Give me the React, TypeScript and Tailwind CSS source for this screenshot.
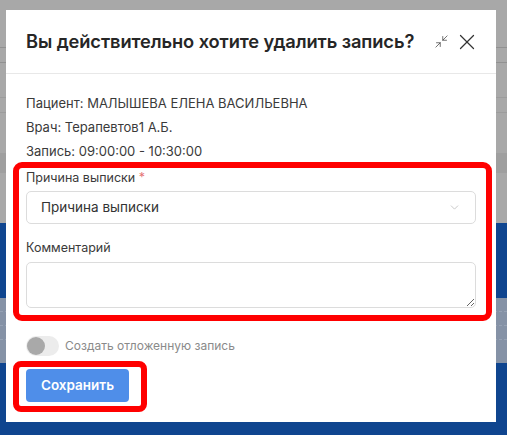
import { Minimize2, X, ChevronDown } from "lucide-react";

const font = { fontFamily: "Inter, 'Noto Sans', sans-serif" };

const Backdrop = () => {
  return (
    <div className="flex h-[435px] w-full flex-col">
      <div className="h-[47px] bg-[#a8a8a8]" />
      <div className="h-[15px] border-t border-[#919191] bg-[#a8a8a8]" />
      <div className="h-[35px] border-t border-[#919191] bg-[#a8a8a8]" />
      <div className="h-[15px] border-t border-[#9c9c9c] bg-[#a8a8a8]" />
      <div className="h-[41px] border-t border-[#9c9c9c] bg-[#a8a8a8]" />
      <div className="h-[20px] bg-[#9f9f9f]" />
      <div className="h-[50px] bg-[#a8a8a8]" />
      <div className="h-[75px] bg-[#0f458f]" />
      <div className="flex h-[65px] flex-col bg-[#8592a6]">
        <div className="h-[14px] border-b border-dashed border-[#96a2b4]" />
        <div className="h-[14px] border-b border-dashed border-[#96a2b4]" />
        <div className="h-[14px] border-b border-dashed border-[#96a2b4]" />
      </div>
      <div className="flex-1 bg-[#0f458f]" />
    </div>
  );
};

const DeleteRecordModal = () => {
  return (
    <div className="absolute left-[6px] top-[10px] w-[490px] bg-white" style={font}>
      <div className="flex h-[64px] items-center justify-between border-b border-[#e8e8e8] pl-[20px] pr-[16px]">
        <h2 className="text-[18.3px] font-semibold tracking-[-0.1px] text-[#262626]">
          Вы действительно хотите удалить запись?
        </h2>
        <div className="flex items-center gap-[5px] text-[#333]">
          <Minimize2 size={15} strokeWidth={1.1} />
          <X size={26} strokeWidth={1.15} />
        </div>
      </div>

      <div className="px-[20px] pb-[20px] pt-[19px] text-[13px] text-[#3a3a3a]">
        <div className="flex flex-col gap-[4px] leading-[20px]">
          <p>Пациент: МАЛЫШЕВА ЕЛЕНА ВАСИЛЬЕВНА</p>
          <p>Врач: Терапевтов1 А.Б.</p>
          <p>Запись: 09:00:00 - 10:30:00</p>
        </div>

        <label className="mt-[7px] block text-[12.5px] leading-[20px]">
          Причина выписки <span className="text-[#e57373]">*</span>
        </label>
        <div className="mt-[3px] flex h-[33px] items-center justify-between rounded-[5px] border border-[#dcdcdc] px-[14px] text-[13.5px] text-[#333]">
          <span>Причина выписки</span>
          <ChevronDown size={13} strokeWidth={1.5} className="text-[#bdbdbd]" />
        </div>

        <label className="mt-[14px] block text-[12.5px] leading-[20px]">Комментарий</label>
        <textarea className="mt-[4px] block h-[46px] w-full rounded-[5px] border border-[#dcdcdc] outline-none" />

        <div className="mt-[28px] flex items-center gap-[6px]">
          <div className="flex h-[20px] w-[33px] items-center rounded-full bg-[#ececec] pl-[1px]">
            <div className="h-[18px] w-[18px] rounded-full bg-[#a9a9a9]" />
          </div>
          <span className="text-[12px] text-[#8a8a8a]">Создать отложенную запись</span>
        </div>

        <button className="mt-[13px] h-[33px] w-[103px] rounded-[4px] bg-[#4f8ee9] text-[13.5px] font-semibold text-white">
          Сохранить
        </button>
      </div>
    </div>
  );
};

export default function App() {
  return (
    <div className="relative h-[435px] w-full overflow-hidden">
      <Backdrop />
      <DeleteRecordModal />
      {/* highlight frames drawn over the form */}
      <div className="pointer-events-none absolute left-[13px] top-[162px] h-[159px] w-[479px] rounded-[9px] border-[6px] border-[#ff0000]" />
      <div className="pointer-events-none absolute left-[13px] top-[361px] h-[51px] w-[134px] rounded-[8px] border-[6px] border-[#ff0000]" />
    </div>
  );
}
